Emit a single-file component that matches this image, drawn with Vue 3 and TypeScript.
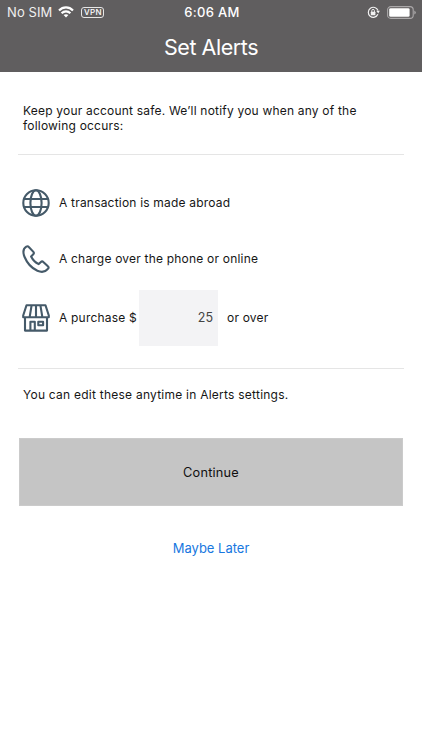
<script setup lang="ts">
import { ref } from 'vue'

const amount = ref<number>(25)
</script>

<template>
  <div class="screen">
    <header class="header">
      <div class="status">
        <div class="status-left">
          <span class="carrier">No SIM</span>
          <svg class="wifi" width="16" height="12" viewBox="0 0 16 12" fill="none" stroke="#fff" stroke-width="2.2">
            <path d="M1 4.4C5 .3 11 .3 15 4.4" />
            <path d="M3.6 7.2c2.5-2.5 6.3-2.5 8.8 0" />
            <path d="M8 11.5 5.6 9.1c1.4-1.2 3.4-1.2 4.8 0Z" fill="#fff" stroke="none" />
          </svg>
          <span class="vpn">VPN</span>
        </div>
        <span class="time">6:06 AM</span>
        <div class="status-right">
          <svg width="13" height="13" viewBox="0 0 13 13" fill="none" stroke="#f2f2f2">
            <path d="M10.9 8.3A5 5 0 1 1 11 4.5" stroke-width="1.2" />
            <path d="m9.2 4.8 3.6 0-1.5 2.6Z" fill="#f2f2f2" stroke="none" />
            <rect x="3.8" y="5.8" width="4.6" height="3.5" rx=".5" fill="#f2f2f2" stroke="none" />
            <path d="M4.8 6V4.7a1.3 1.3 0 0 1 2.6 0V6" stroke-width="1" />
          </svg>
          <svg class="battery" width="29" height="13" viewBox="0 0 29 13">
            <rect x=".6" y=".6" width="25.6" height="11.8" rx="3.2" fill="none" stroke="#aaa8a9" stroke-width="1.1" />
            <rect x="2.2" y="2.2" width="20.4" height="8.6" rx="1.4" fill="#fff" />
            <path d="M27.3 4.4q1.5.7 1.5 2.1t-1.5 2.1Z" fill="#aaa8a9" />
          </svg>
        </div>
      </div>
      <h1 class="title">Set Alerts</h1>
    </header>

    <main class="content">
      <p class="intro">Keep your account safe. We’ll notify you when any of the<br />following occurs:</p>
      <ul class="alerts">
        <li class="alert">
          <svg class="icon" width="28" height="28" viewBox="0 0 28 28" fill="none" stroke="#455a69" stroke-width="2.1">
            <circle cx="14" cy="14" r="12.7" />
            <ellipse cx="14" cy="14" rx="5.6" ry="12.7" />
            <path d="M2 10h24M2 18h24" />
          </svg>
          <span>A transaction is made abroad</span>
        </li>
        <li class="alert">
          <svg class="icon" width="28" height="28" viewBox="0 0 28 28" fill="none" stroke="#455a69" stroke-width="2.1" stroke-linejoin="round">
            <path d="M4.3 1.6C1.4 3.4.8 7.6 2.6 12c2.3 5.6 7.4 11.3 12.8 13.8 4.4 1.9 8.2 1 10.7-2.1.8-1 .7-1.6-.2-2.4l-4.6-4.4c-.8-.8-1.6-.8-2.4 0l-2.2 2.2c-3.2-1.5-6-4.3-7.6-7.6l2.2-2.2c.8-.8.8-1.5.1-2.4L6.8 2C6 1 5.300 1 4.300 1.600Z" />
          </svg>
          <span>A charge over the phone or online</span>
        </li>
        <li class="alert">
          <svg class="icon" width="28" height="28" viewBox="0 0 28 28" fill="none" stroke="#455a69" stroke-width="2.1" stroke-linejoin="round">
            <path d="M4.5 1.3h19l3.3 10.2v1.8H1.2v-1.8ZM9.6 1.3 7.6 13.3M14 1.3v12M18.4 1.3l2 12" />
            <path d="M3 13.3v13.3h22V13.3M8.4 26.6v-8.8h4.4v8.8M16.300 17.800h4.800v3.400h-4.800Z" />
          </svg>
          <span class="purchase">A purchase $</span>
          <input v-model="amount" class="amount" type="text" inputmode="numeric" />
          <span>or over</span>
        </li>
      </ul>
      <p class="note">You can edit these anytime in Alerts settings.</p>
      <button class="continue" type="button">Continue</button>
      <button class="later" type="button">Maybe Later</button>
    </main>
  </div>
</template>

<style>
body {
  margin: 0;
  background: #fff;
}
</style>

<style scoped>
.screen {
  width: 422px;
  height: 750px;
  background: #fff;
  color: #161616;
  font-family: Inter, "Liberation Sans", sans-serif;
  font-size: 12px;
  line-height: 15px;
  overflow: hidden;
}
.header {
  height: 72px;
  box-sizing: border-box;
  background: #605e5f;
  color: #fff;
}
.status {
  display: grid;
  grid-template-columns: 1fr auto 1fr;
  align-items: center;
  height: 24px;
  padding: 0 5px 0 7px;
}
.status-left,
.status-right {
  display: flex;
  align-items: center;
}
.status-right {
  justify-content: flex-end;
  gap: 7px;
}
.carrier {
  font-size: 13px;
  letter-spacing: 0.1px;
  color: #f0f0f0;
}
.wifi {
  margin: 0 7px 0 6px;
}
.battery {
  margin-right: 1px;
}
.vpn {
  box-sizing: border-box;
  width: 23px;
  height: 11px;
  border: 1px solid #e6e6e6;
  border-radius: 3px;
  font-size: 8px;
  font-weight: 500;
  line-height: 9px;
  text-align: center;
  letter-spacing: 0.3px;
}
.time {
  font-size: 13px;
  font-weight: 500;
  letter-spacing: 0.3px;
}
.title {
  margin: 9px 0 0;
  font-size: 21.5px;
  font-weight: 400;
  line-height: 28px;
  text-align: center;
  letter-spacing: -0.45px;
}
.content {
  padding: 0 18px;
}
.intro {
  margin: 0;
  padding: 31px 5px 21px;
  height: 30px;
  letter-spacing: 0.2px;
  white-space: nowrap;
}
.alerts {
  margin: 0;
  padding: 20px 0 22px 4px;
  list-style: none;
  border: solid #e5e5e5;
  border-width: 1px 0;
}
.alert {
  display: flex;
  align-items: center;
  height: 56px;
}
.alert:last-child {
  padding-top: 3px;
}
.icon {
  flex: none;
  margin-right: 9px;
}
.alert span {
  padding-bottom: 1px;
  letter-spacing: 0.2px;
  white-space: nowrap;
}
.alert .purchase {
  flex: none;
  width: 78px;
}
.amount {
  box-sizing: border-box;
  width: 79px;
  height: 56px;
  margin: 0 9px 0 2px;
  padding: 0 5px 1px;
  border: 0;
  border-radius: 0;
  background: #f3f3f5;
  color: #444;
  font: inherit;
  font-size: 12.5px;
  text-align: right;
}
.note {
  margin: 0;
  padding: 18px 5px 36px;
  letter-spacing: 0.24px;
}
.continue {
  display: block;
  width: 384px;
  height: 68px;
  margin: 0 1px;
  padding: 0;
  border: 1px solid #cbcbcb;
  background: #c5c5c5;
  color: #111;
  font: inherit;
  font-size: 12.75px;
  letter-spacing: 0.2px;
}
.later {
  display: block;
  margin: 34px auto 0;
  padding: 0;
  border: 0;
  background: none;
  color: #1877e0;
  font: inherit;
  font-size: 13px;
  line-height: 16px;
}
</style>
